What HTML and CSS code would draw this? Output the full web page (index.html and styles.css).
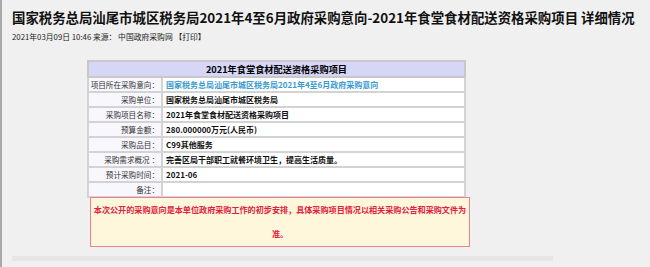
FILE: index.html
```html
<!DOCTYPE html>
<html lang="zh-CN">
<head>
<meta charset="utf-8">
<title>详细情况</title>
<link rel="stylesheet" href="styles.css">
</head>
<body>
<div class="page">
  <h1 class="title">国家税务总局汕尾市城区税务局2021年4至6月政府采购意向-2021年食堂食材配送资格采购项目 详细情况</h1>
  <div class="meta">2021年03月09日 10:46 来源： 中国政府采购网 【打印】</div>
  <div class="content">
    <table class="info">
      <tr><th colspan="2">2021年食堂食材配送资格采购项目</th></tr>
      <tr><td class="label">项目所在采购意向：</td><td class="value"><a class="link" href="#">国家税务总局汕尾市城区税务局2021年4至6月政府采购意向</a></td></tr>
      <tr><td class="label">采购单位：</td><td class="value">国家税务总局汕尾市城区税务局</td></tr>
      <tr><td class="label">采购项目名称：</td><td class="value">2021年食堂食材配送资格采购项目</td></tr>
      <tr><td class="label">预算金额：</td><td class="value">280.000000万元(人民币)</td></tr>
      <tr><td class="label">采购品目：</td><td class="value">C99其他服务</td></tr>
      <tr><td class="label">采购需求概况 ：</td><td class="value">完善区局干部职工就餐环境卫生，提高生活质量。</td></tr>
      <tr><td class="label">预计采购时间：</td><td class="value">2021-06</td></tr>
      <tr><td class="label">备注：</td><td class="value"></td></tr>
    </table>
    <div class="notice">本次公开的采购意向是本单位政府采购工作的初步安排，具体采购项目情况以相关采购公告和采购文件为准。</div>
  </div>
  <div class="scrollbar"></div>
</div>
</body>
</html>
```

FILE: styles.css
```css
html, body {
  margin: 0;
  padding: 0;
  background: #f0f0f0;
}
body {
  font-family: "Noto Sans CJK SC", "Noto Sans", sans-serif;
  color: #000;
  height: 267px;
  overflow: hidden;
  border-left: 2px solid #a9a9a9;
  box-sizing: border-box;
}
.page {
  padding: 8px 0 0 10px;
}
.title {
  margin: 0;
  font-size: 13.4px;
  font-weight: 700;
  line-height: 18px;
  white-space: nowrap;
  color: #111;
}
.meta {
  margin-top: 6px;
  font-size: 7.8px;
  line-height: 10px;
  color: #222;
  white-space: nowrap;
}
.content {
  margin-top: 18px;
  margin-left: 75px;
  width: 384px;
}
.info {
  width: 379px;
  border-collapse: collapse;
  font-size: 8px;
}
.info th,
.info td {
  border: 2px solid #d3d3d3;
  padding: 0 3px;
  line-height: 13px;
  height: 12px;
  white-space: nowrap;
}
.info th {
  background: #d6d6f6;
  height: 14px;
  font-size: 9.2px;
  font-weight: 700;
  text-align: center;
  border-color: #c8c8c8;
}
.info .label {
  width: 69px;
  padding: 0 2px 0 1px;
  font-size: 7.6px;
  background: #f7f7fd;
  text-align: right;
  color: #333;
  font-weight: 400;
}
.info .value {
  background: #fff;
  font-weight: 700;
  color: #111;
}
.info .link {
  color: #3a9ad0;
  text-decoration: none;
  font-weight: 700;
}
.notice {
  margin: -1px 0 0 3px;
  width: 378px;
  border: 1px solid #ec8090;
  background: #fff7dc;
  color: #e2203f;
  font-size: 8.1px;
  font-weight: 700;
  line-height: 24px;
  text-align: center;
}
.scrollbar {
  margin-top: 9px;
  width: 541px;
  height: 5px;
  background: #e6e6e6;
}
```
